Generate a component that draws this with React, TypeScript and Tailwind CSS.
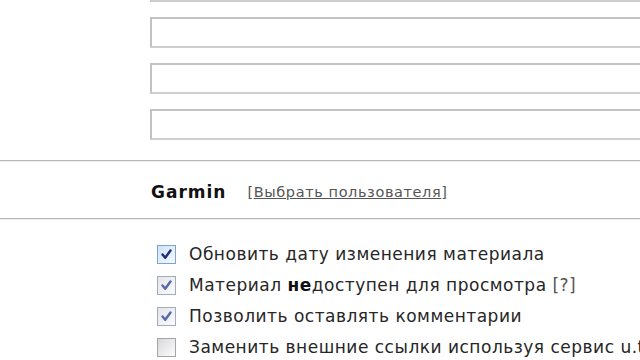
import React from "react";

function Check({ variant }: { variant: "focus" | "on" | "off" }) {
  const box =
    variant === "focus"
      ? "border-[#7fa4c9] bg-gradient-to-br from-[#cfe3f7] to-[#f4f9ff]"
      : variant === "on"
      ? "border-[#a2adbb] bg-gradient-to-br from-[#e2e5ea] to-[#fbfbfc]"
      : "border-[#a2a6ac] bg-gradient-to-br from-[#d8d8d8] to-[#fcfcfc]";
  const stroke = variant === "focus" ? "#1f2a78" : "#5868a8";
  return (
    <div className={`w-[19px] h-[19px] border-[1.5px] ${box} flex items-center justify-center shrink-0`}>
      {variant !== "off" && (
        <svg width="13" height="13" viewBox="0 0 13 13">
          <path d="M2.5 6.5 L5.2 9.8 L10.5 2.5" fill="none" stroke={stroke} strokeWidth="2.4" strokeLinecap="round" strokeLinejoin="round" />
        </svg>
      )}
    </div>
  );
}

function Field() {
  return (
    <div className="h-[31px] w-[620px] border-2 border-[#cfcfcf] border-t-[#c2c2c2] border-l-[#c2c2c2] bg-white" />
  );
}

export default function App() {
  const font = { fontFamily: '"DejaVu Sans", Verdana, sans-serif' };
  return (
    <div className="w-[640px] h-[360px] overflow-hidden bg-white text-[#262626]" style={font}>
      <div className="-mt-[29px] pl-[150px] flex flex-col gap-[15px] pb-[20px]">
        <Field />
        <Field />
        <Field />
        <Field />
      </div>
      <div className="border-t border-[#b9b9b9]" />
      <div className="border-t border-[#ececec]" />
      <div className="h-[56px] pl-[151px] flex items-center gap-[21px] whitespace-nowrap">
        <span className="text-[17px] tracking-[1px] font-bold text-[#111] pt-[6px]">Garmin</span>
        <span className="text-[14.5px] tracking-[0.6px] text-[#555] pt-[6px]">
          [<span className="underline">Выбрать пользователя</span>]
        </span>
      </div>
      <div className="border-t border-[#b9b9b9]" />
      <div className="border-t border-[#ececec]" />
      <div className="pl-[157px] pt-[25px] flex flex-col gap-[12px] text-[17px] tracking-[0.5px] whitespace-nowrap">
        <div className="flex items-center gap-[13px] h-[19px]">
          <Check variant="focus" />
          <span>Обновить дату изменения материала</span>
        </div>
        <div className="flex items-center gap-[13px] h-[19px]">
          <Check variant="on" />
          <span>
            Материал <b className="text-[#111]">не</b>доступен для просмотра <span className="text-[#555]">[?]</span>
          </span>
        </div>
        <div className="flex items-center gap-[13px] h-[19px]">
          <Check variant="on" />
          <span>Позволить оставлять комментарии</span>
        </div>
        <div className="flex items-center gap-[13px] h-[19px]">
          <Check variant="off" />
          <span>Заменить внешние ссылки используя сервис u.to</span>
        </div>
      </div>
    </div>
  );
}
